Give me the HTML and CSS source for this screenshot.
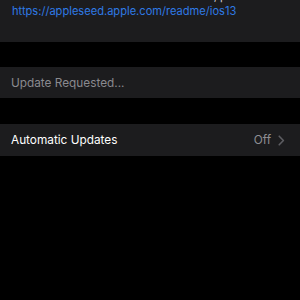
FILE: index.html
```html
<!DOCTYPE html>
<html>
<head>
<meta charset="utf-8">
<link rel="stylesheet" href="styles.css">
</head>
<body>
<div class="page">
  <div class="card note">
    <p class="note-text">what is contained in this beta software, please see:</p>
    <a class="note-link" href="#">https://appleseed.apple.com/readme/ios13</a>
  </div>
  <div class="card row status">
    <span class="label muted">Update Requested...</span>
  </div>
  <div class="card row">
    <span class="label">Automatic Updates</span>
    <span class="value">Off
      <svg class="chev" width="7" height="11" viewBox="0 0 7 11"><path d="M1.2 1.2 L5.4 5.5 L1.2 9.8" fill="none" stroke="#5d5d62" stroke-width="1.6" stroke-linecap="round" stroke-linejoin="round"/></svg>
    </span>
  </div>
</div>
</body>
</html>
```
FILE: styles.css
```css
html, body {
  margin: 0;
  padding: 0;
  background: #000;
  width: 300px;
  height: 300px;
  overflow: hidden;
}
.page {
  font-family: Inter, "Noto Sans", sans-serif;
  display: flex;
  flex-direction: column;
  margin-top: -11px;
}
.card {
  background: #1c1c1e;
}
.note {
  padding: 0 12px 23px 12px;
  display: flex;
  flex-direction: column;
  font-size: 11.1px;
  line-height: 15px;
  white-space: nowrap;
}
.note-text {
  margin: 0;
  color: #d0d0d4;
}
.note-link {
  color: #2f7ae5;
  text-decoration: none;
}
.row {
  display: flex;
  align-items: center;
  justify-content: space-between;
  padding: 0 15px 0 11px;
  font-size: 11.8px;
}
.status {
  margin-top: 25px;
  height: 31px;
}
.status + .row {
  margin-top: 26px;
  height: 32px;
}
.label {
  color: #fff;
}
.label.muted {
  color: #8a8a8f;
}
.value {
  color: #8e8e93;
  display: flex;
  align-items: center;
  gap: 7px;
}
```
